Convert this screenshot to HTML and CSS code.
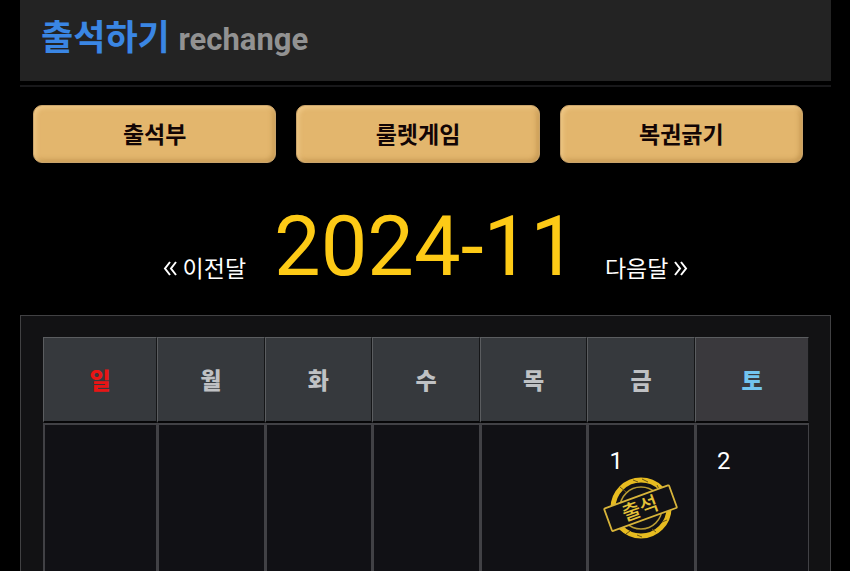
FILE: index.html
```html
<!DOCTYPE html>
<html lang="ko">
<head>
    <meta charset="UTF-8">
    <meta name="viewport" content="width=device-width, initial-scale=1.0">
    <title>출석하기</title>
    <link rel="stylesheet" href="styles.css">
</head>
<body>
    <header class="page-header">
        <h1>출석하기 <small>rechange</small></h1>
    </header>

    <div class="menu">
        <button type="button">출석부</button>
        <button type="button">룰렛게임</button>
        <button type="button">복권긁기</button>
    </div>

    <nav class="month-nav">
        <a href="#prev">
            <svg class="arrow" viewBox="0 0 14 16"><path d="M7 1L2 7.500L7 14M13 1L8 7.500L13 14"/></svg>
            이전달
        </a>
        <h2>2024-11</h2>
        <a href="#next">
            다음달
            <svg class="arrow" viewBox="0 0 14 16"><path d="M1 1L6 7.500L1 14M7 1L12 7.500L7 14"/></svg>
        </a>
    </nav>

    <main class="calendar-box">
        <table class="calendar">
            <thead>
                <tr>
                    <th class="sun">일</th>
                    <th>월</th>
                    <th>화</th>
                    <th>수</th>
                    <th>목</th>
                    <th>금</th>
                    <th class="sat">토</th>
                </tr>
            </thead>
            <tbody>
                <tr>
                    <td></td>
                    <td></td>
                    <td></td>
                    <td></td>
                    <td></td>
                    <td>
                        <span class="day">1</span>
                        <!-- attendance stamp -->
                        <svg class="stamp" viewBox="0 0 76 64" role="img" aria-label="출석">
                            <circle class="ring" cx="38" cy="31" r="28"/>
                            <circle class="ring-inner" cx="38" cy="31" r="21"/>
                            <path class="wear" d="M17 10l6 5M30 3l5 2M39 2l6 3M54 8l3 6M64 43l-5 2M53 55l-4-3M39 60l-5-2M23 57l4-3M14 49l5 1"/>
                            <g transform="rotate(-20 38 31)">
                                <rect class="plate" x="3" y="19" width="69" height="24" rx="1"/>
                                <text x="37" y="38" text-anchor="middle">출석</text>
                            </g>
                        </svg>
                    </td>
                    <td><span class="day">2</span></td>
                </tr>
            </tbody>
        </table>
    </main>
</body>
</html>
```
FILE: styles.css
```css
html {
    scrollbar-width: none;
}

body {
    margin: 0;
    padding: 0 19px 0 20px;
    background-color: #000;
    color: #fff;
    font-family: Roboto, 'Noto Sans CJK KR', sans-serif;
}

.page-header {
    padding: 0 21px 2px;
    margin-bottom: 24px;
    background-color: #232323;
    box-shadow: 0 4px #000, 0 6px #18181a;
}

h1 {
    margin: 0;
    font-size: 35px;
    line-height: 78px;
    font-weight: bold;
    color: #3a86e4;
}

h1 small {
    font-size: 31px;
    font-weight: bold;
    color: #929292;
}

.menu {
    display: flex;
    gap: 20px;
    padding: 0 28px 0 13px;
}

.menu button {
    flex: 1;
    height: 58px;
    padding: 0 0 2px;
    border: 1px solid #c9a36a;
    border-radius: 9px;
    background-color: #e3b66d;
    box-shadow: inset 2px 2px 4px rgba(255, 224, 165, 0.5), inset -2px -2px 5px rgba(150, 105, 40, 0.4);
    color: #120505;
    font-family: inherit;
    font-size: 23px;
    font-weight: bold;
    cursor: pointer;
}

.month-nav {
    display: flex;
    justify-content: center;
    align-items: flex-end;
    gap: 28px;
    padding: 36px 0 20px;
}

.month-nav h2 {
    margin: 0;
    font-size: 83px;
    line-height: 96px;
    font-weight: normal;
    color: #fdca16;
}

.month-nav a {
    color: #fff;
    font-size: 23px;
    line-height: 50px;
    text-decoration: none;
}

.arrow {
    width: 14px;
    height: 16px;
    fill: none;
    stroke: #fff;
    stroke-width: 2;
}

.calendar-box {
    padding: 21px 21px 21px 22px;
    border: 1px solid #414143;
    background-color: #121214;
}

.calendar {
    width: 100%;
    border-collapse: separate;
    border-spacing: 0;
    table-layout: fixed;
}

.calendar th {
    height: 81px;
    padding: 0 0 2px;
    border: 1px solid #5b5d60;
    border-right-color: #151618;
    border-bottom: 2px solid #060607;
    background-color: #36393d;
    color: #bfc1c4;
    font-size: 23px;
    font-weight: 900;
}

.calendar th:first-child,
.calendar th:last-child {
    width: 112px;
}

.calendar .sun {
    color: #e81515;
}

.calendar .sat {
    background-color: #3a393d;
    color: #72c4ee;
}

.calendar td {
    height: 150px;
    padding: 20px 0 0 14px;
    border: 1px solid #414145;
    border-top-width: 2px;
    border-left-width: 2px;
    background-color: #111115;
    vertical-align: top;
}

.day {
    display: block;
    padding-left: 6px;
    font-size: 24px;
    line-height: 32px;
}

.stamp {
    display: block;
    width: 76px;
    height: 64px;
}

.stamp .ring {
    fill: none;
    stroke: #e7bc20;
    stroke-width: 5;
}

.stamp .ring-inner {
    fill: none;
    stroke: #b79a32;
    stroke-width: 1.5;
}

.stamp .wear {
    stroke: #6b5615;
    stroke-width: 1;
}

.stamp .plate {
    fill: #111115;
    stroke: #d7b43a;
    stroke-width: 1.8;
}

.stamp text {
    fill: #e4c238;
    font-size: 20px;
    font-weight: 500;
}
```
